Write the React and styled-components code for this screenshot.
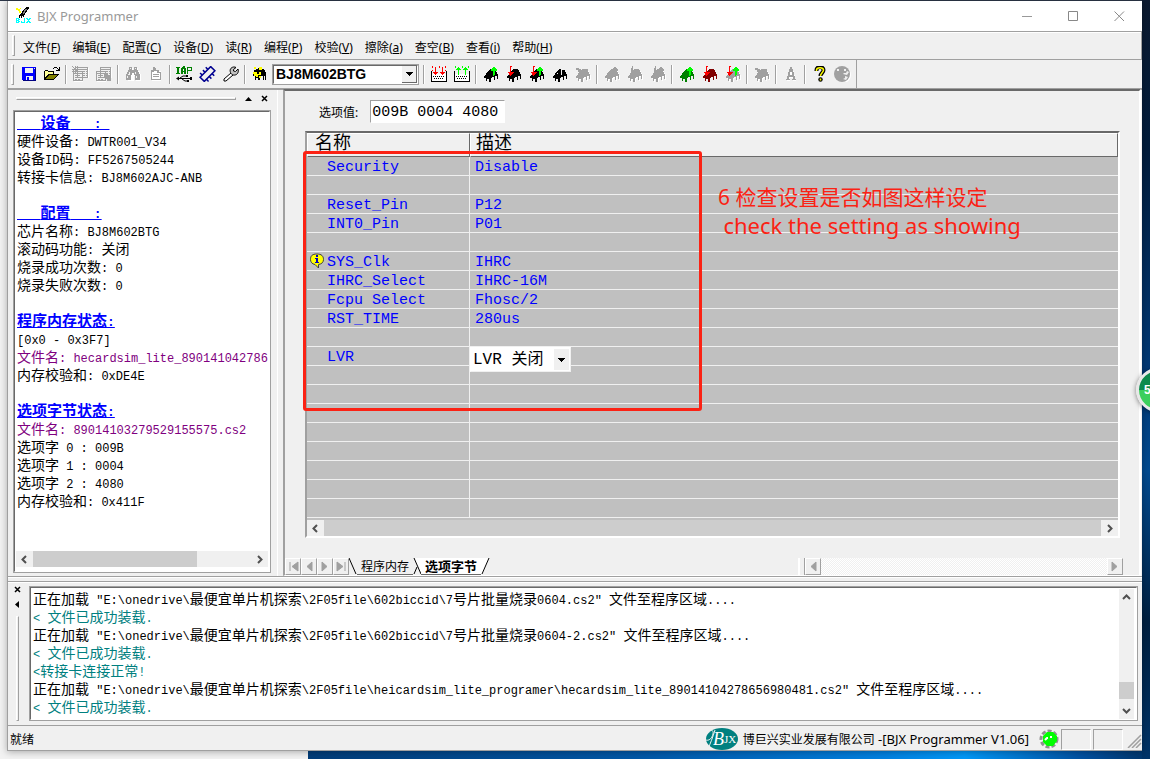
import React, { useState } from "react";
import styled, { createGlobalStyle, css } from "styled-components";

const GlobalStyle = createGlobalStyle`
  * {
    box-sizing: border-box;
  }

  body {
    margin: 0;
    font-family: "Noto Sans", "Noto Sans CJK SC", sans-serif;
    font-size: 12px;
    color: #000;
  }

  button {
    font: inherit;
    color: inherit;
    padding: 0;
    border: 0;
    background: none;
  }
`;

const sunken = css`
  border: 2px solid;
  border-color: #696969 #fff #fff #696969;
  outline: 1px solid #a0a0a0;
  outline-offset: -1px;
`;

const Desktop = styled.div`
  position: relative;
  display: flex;
  min-height: 100vh;
  padding: 1px 8px 8px;
  overflow: hidden;
  background:
    linear-gradient(#0c1a30, #001c3c 20%, #003a78 50%, #004a90 62%, #002040 82%, #003468)
      right / 8px 100% no-repeat,
    linear-gradient(90deg, #003c78, #0058a8 40%, #0080e0 68%, #0098f8 78%, #0050a0 92%, #003468)
      right bottom / calc(100% - 308px) 8px no-repeat,
    linear-gradient(#2c3648, #2c3648) right top / 100% 1px no-repeat,
    #f2f2f2;
`;

const Window = styled.div`
  flex: 1;
  display: flex;
  flex-direction: column;
  min-width: 0;
  background: #f0f0f0;
  border-left: 1px solid #a0a0a0;
  border-bottom: 1px solid #a0a0a0;
  box-shadow: 0 1px 7px rgba(0, 0, 0, 0.3);
  margin-left: -1px;
`;

const TitleBar = styled.header`
  display: flex;
  align-items: center;
  height: 30px;
  padding-left: 8px;
  background: #fff;
`;

const Title = styled.h1`
  flex: 1;
  margin: 0 0 0 4px;
  font-size: 13px;
  font-weight: 400;
  color: #999;
`;

const WindowButton = styled.button`
  display: flex;
  align-items: center;
  justify-content: center;
  width: 46px;
  height: 29px;
`;

const MenuBar = styled.nav`
  display: flex;
  align-items: center;
  height: 29px;
  padding-left: 4px;
  border: solid #a0a0a0;
  border-width: 1px 1px 1px 0;
  box-shadow: inset 0 1px #fff;
`;

const Gripper = styled.span`
  width: 3px;
  height: 21px;
  margin-right: 2px;
  border: 1px solid;
  border-color: #fff #a0a0a0 #a0a0a0 #fff;
`;

const MenuItem = styled.button`
  padding: 2px 6px 0;
  height: 22px;
  white-space: nowrap;
`;

const ToolRow = styled.div`
  display: flex;
  border-bottom: 2px solid #a0a0a0;
`;

const ToolBar = styled.div`
  display: flex;
  align-items: center;
  height: 28px;
  padding: 0 2px 0 3px;
  border-right: 1px solid #a0a0a0;

  ${Gripper} {
    margin-right: 3px;
  }
`;

const ToolButton = styled.button`
  display: flex;
  align-items: center;
  justify-content: center;
  width: 23px;
  height: 22px;
`;

const Separator = styled.span`
  width: 2px;
  height: 19px;
  margin: 0 2px;
  background: #a0a0a0;
  border-right: 1px solid #fff;
`;

const ChipCombo = styled.div`
  position: relative;
  width: 147px;
  margin: 0 2px 0 1px;

  select {
    appearance: none;
    width: 100%;
    height: 21px;
    padding: 0 0 0 2px;
    background: #fff;
    border-radius: 0;
    color: #000;
    font: bold 14px "Liberation Sans", sans-serif;
    ${sunken}
  }
`;

const Arrow = styled.span`
  position: absolute;
  display: flex;
  align-items: center;
  justify-content: center;
  top: 2px;
  right: 2px;
  width: 15px;
  bottom: 2px;
  background: #f0f0f0;
  border: solid #696969;
  border-width: ${({ $flat }) => ($flat ? "0" : "0 1px 1px 0")};
  pointer-events: none;
`;

const Work = styled.div`
  flex: 1;
  display: flex;
  min-height: 0;
`;

const SidePane = styled.aside`
  display: flex;
  flex-direction: column;
  width: 270px;
  padding: 0 6px 3px 5px;
  border-right: 1px solid #fff;
`;

const PaneGrip = styled.div`
  display: flex;
  align-items: center;
  gap: 9px;
  height: 20px;
  padding: 0 3px 3px;

  i {
    flex: 1;
    height: 3px;
    border: 1px solid;
    border-color: #fff #a0a0a0 #a0a0a0 #fff;
  }
`;

const InfoBox = styled.div`
  flex: 1;
  display: flex;
  flex-direction: column;
  min-height: 0;
  padding: 1px 1px 4px;
  background: #fff;
  overflow: hidden;
  ${sunken}
`;

const InfoList = styled.div`
  flex: 1;
  padding-top: 3px;
  overflow: hidden;
`;

const Line = styled.p`
  margin: 0;
  height: 18px;
  line-height: 18px;
  padding-left: 1px;
  white-space: pre;
  font-family: "Liberation Mono", "Noto Sans CJK SC", monospace;
  font-size: 12px;
  color: ${({ $color }) => $color || "#000"};
`;

const Heading = styled.h2`
  margin: 0;
  height: 18px;
  line-height: 18px;
  padding-left: 1px;
  white-space: pre;
  font-family: "Liberation Mono", "Noto Sans CJK SC", monospace;
  font-size: 13px;
  font-weight: 700;
  color: #0000ff;
  text-decoration: underline;
`;

const Han = styled.span`
  font-family: "Noto Sans CJK SC", sans-serif;
  font-size: ${({ $size }) => $size}px;
  line-height: 0;
`;

const ScrollBar = styled.div`
  display: flex;
  flex-direction: ${({ $vertical }) => ($vertical ? "column" : "row")};
  flex: none;
  ${({ $vertical }) => ($vertical ? "width: 15px;" : "height: 16px;")}
  background: #f0f0f0;

  button {
    display: flex;
    align-items: center;
    justify-content: center;
    width: ${({ $vertical }) => ($vertical ? 15 : 17)}px;
    height: ${({ $vertical }) => ($vertical ? 17 : 16)}px;
  }
`;

const Track = styled.div`
  flex: 1;
  display: flex;
  flex-direction: inherit;
`;

const Thumb = styled.div`
  flex: 0 0 ${({ $size }) => $size};
  margin-top: ${({ $offset }) => $offset || "0"};
  background: #cdcdcd;
`;

const MainView = styled.main`
  flex: 1;
  display: flex;
  flex-direction: column;
  min-width: 0;
  margin: -1px 1px 0 5px;
  border: solid;
  border-width: 2px 2px 1px;
  border-color: #696969 #fff #fff #a0a0a0;
`;

const OptionRow = styled.div`
  display: flex;
  align-items: center;
  gap: 12px;
  padding: 9px 0 8px 34px;

  input {
    width: 135px;
    height: 23px;
    padding: 1px 0 0 1px;
    border: 1px solid;
    border-color: #a0a0a0 #fff #fff #a0a0a0;
    background: #fff;
    font: 15px "Liberation Mono", monospace;
    color: #000;
  }
`;

const GridBox = styled.div`
  position: relative;
  margin: 0 19px 0 20px;
  ${sunken}
  border-color: #696969 #fff #fff #a0a0a0;
  outline: 0;
  background: #c0c0c0;
`;

const Grid = styled.table`
  width: 100%;
  margin-bottom: 2px;
  border-collapse: separate;
  border-spacing: 0;
  table-layout: fixed;
  font: 15px "Liberation Mono", "Noto Sans CJK SC", monospace;

  col:first-child {
    width: 163px;
  }

  th {
    height: 24px;
    padding: 2px 6px 0 7px;
    background: #f0f0f0;
    border: 1px solid;
    border-color: #fff #696969 #696969 #fff;
    text-align: left;
    font-weight: 400;
    line-height: 18px;
  }

  th + th {
    padding-left: 5px;
  }

  td {
    position: relative;
    height: 19px;
    padding: 3px 0 0 5px;
    border-bottom: 1px solid #f0f0f0;
    color: #0000ff;
    line-height: 15px;
    white-space: pre;
  }

  td:first-child {
    padding-left: 20px;
    border-right: 1px solid #f0f0f0;
  }
`;

const Hint = styled.span`
  position: absolute;
  left: 2px;
  top: 1px;
  line-height: 0;
`;

const CellCombo = styled.span`
  position: absolute;
  z-index: 1;
  top: 0;
  left: 0;
  width: 101px;

  select {
    appearance: none;
    display: block;
    width: 100%;
    height: 25px;
    padding: 0 0 0 2px;
    border: 1px solid #fff;
    border-color: #fff #f0f0f0 #f0f0f0 #fff;
    border-radius: 0;
    background: #fff;
    color: #000;
    font: 16px "Liberation Mono", "Noto Sans CJK SC", monospace;
  }
`;

const Marker = styled.div`
  position: absolute;
  z-index: 2;
  top: 18px;
  left: -4px;
  width: 399px;
  height: 260px;
  border: 3px solid #fb2214;
  border-radius: 3px;
  pointer-events: none;
`;

const Note = styled.p`
  position: absolute;
  top: 50px;
  left: 411px;
  margin: 0;
  font-family: "Noto Sans", "Noto Sans CJK SC", sans-serif;
  font-size: 21px;
  line-height: 28px;
  color: #fb2214;
  white-space: pre;

  span {
    font-size: 22px;
  }
`;

const SheetBar = styled.div`
  display: flex;
  align-items: stretch;
  height: 17px;
  margin-top: auto;
  padding-right: 16px;
`;

const SheetNav = styled.button`
  display: flex;
  align-items: center;
  justify-content: center;
  width: 16px;
  border: 1px solid;
  border-color: #fff #a0a0a0 #a0a0a0 #fff;
`;

const Sheet = styled.button`
  padding: 0 4px;
  line-height: 15px;
  background: ${({ $active }) => ($active ? "#fff" : "transparent")};
  border-bottom: 1px solid #696969;
  font-size: ${({ $active }) => ($active ? 13 : 12)}px;
  font-weight: ${({ $active }) => ($active ? 700 : 400)};
`;

const SheetScroll = styled.div`
  display: flex;
  width: 325px;
  margin-left: auto;
  border-left: 2px solid #fff;

  &::before {
    content: "";
    width: 4px;
    border-right: 1px solid #a0a0a0;
  }
`;

const DottedTrack = styled.div`
  flex: 1;
  background: repeating-conic-gradient(#fff 0 25%, #f0f0f0 0 50%) 0 0 / 2px 2px;
`;

const OutputPane = styled.section`
  display: flex;
  height: 149px;
  padding: 9px 4px 4px 3px;
  border-top: 1px solid #a0a0a0;
  box-shadow: inset 0 1px #fff, inset 0 4px #f0f0f0, inset 0 5px #a0a0a0, inset 0 6px #fff;
`;

const OutputGrip = styled.div`
  display: flex;
  flex-direction: column;
  align-items: center;
  gap: 8px;
  width: 12px;
  margin-right: 6px;

  i {
    flex: 1;
    width: 3px;
    border: 1px solid;
    border-color: #fff #a0a0a0 #a0a0a0 #fff;
  }
`;

const OutputBox = styled.div`
  flex: 1;
  display: flex;
  min-width: 0;
  padding: 1px 2px 0 0;
  background: #fff;
  ${sunken}

  > div:first-child {
    flex: 1;
    min-width: 0;
    padding: 3px 0 0 1px;
    overflow: hidden;
  }
`;

const StatusBar = styled.footer`
  display: flex;
  align-items: center;
  height: 25px;
  padding: 2px 0 0 2px;
  border-top: 1px solid #a0a0a0;
`;

const Ready = styled.span`
  margin-right: auto;
`;

const Company = styled.span`
  margin: 0 10px 0 4px;
  font-size: 13px;
`;

const StatusCell = styled.span`
  width: 30px;
  height: 21px;
  margin-left: 2px;
  border: 1px solid;
  border-color: #a0a0a0 #fff #fff #a0a0a0;
`;

const Ball = styled.div`
  position: absolute;
  top: 367px;
  right: -36px;
  width: 50px;
  height: 46px;
  padding: 13px 0 0 5px;
  border: 3px solid #e8e8e8;
  border-radius: 50%;
  background: linear-gradient(#0d8a4c 50%, #3ccf5c 50%);
  box-shadow: 0 1px 5px rgba(0, 0, 0, 0.5);
  color: #fff;
  font: bold 12px "Liberation Sans", sans-serif;
`;

// Chinese runs are set larger than the fixed-width Latin ones beside them
const Mixed = ({ text, size = 14 }) =>
  text
    .split(/([\u4e00-\u9fff]+)/)
    .map((part, i) =>
      i % 2 ? (
        <Han key={i} $size={size}>
          {part}
        </Han>
      ) : (
        part
      )
    );

const Svg = ({ w = 16, h = 16, children, ...rest }) => (
  <svg width={w} height={h} viewBox={`0 0 ${w} ${h}`} aria-hidden="true" {...rest}>
    {children}
  </svg>
);

const Chevron = ({ dir }) => {
  const turn = { left: 0, up: 90, right: 180, down: 270 }[dir];
  return (
    <Svg w={9} h={9}>
      <path
        d="M6 1L2.500 4.500L6 8"
        fill="none"
        stroke="#505050"
        strokeWidth="2"
        transform={`rotate(${turn} 4.500 4.500)`}
      />
    </Svg>
  );
};

const DownArrow = () => (
  <Svg w={7} h={4} shapeRendering="crispEdges">
    <path d="M0 0H7L3.500 4Z" />
  </Svg>
);

const ChipBody = ({ color }) => (
  <path
    fill={color}
    d="M1 12V10H2V9H3V7H4V6H5V5H6V4H7V3H12V4H13V6H14V8H15V13H14V10H12V14H11V11H9V12H8V16H6V13H4V15H3V12Z"
  />
);

const UpArrow = ({ color }) => (
  <path fill={color} d="M8 5V3H9V2H10V1H12V2H13V3H14V5H12V9H11V10H10V5Z" />
);

const RedArrow = () => (
  <path fill="#ff0000" d="M4 0H6V1H5V6H8V7H7V8H6V9H5V10H4V9H3V7H2V6H4Z" />
);

const Chip = ({ color = "#000", up, down, cross, slit }) => (
  <Svg shapeRendering="crispEdges">
    {color === "#a0a0a0" && (
      <g transform="translate(1 1)">
        <ChipBody color="#fff" />
      </g>
    )}
    <ChipBody color={color} />
    {up && <UpArrow color={up === true ? "#00ff00" : up} />}
    {down && (down === "gray" ? <path fill="#a0a0a0" d="M5 0H6V6H4V2H5Z" /> : <RedArrow />)}
    {slit && <path fill="#f0f0f0" d="M9 3H10V9H9ZM10 3H12V4H10ZM5 7H6V8H5Z" />}
    {cross && <path fill="#a0a0a0" d="M1 2H4V3H6V4H9V3H13V5H9V7H5V6H3V4H1Z" />}
  </Svg>
);

const SaveIcon = () => (
  <Svg shapeRendering="crispEdges">
    <path fill="#0000ff" d="M1 1H15V15H2L1 14Z" />
    <path fill="#000080" d="M14 2H15V15H2V14H14Z" />
    <path fill="#f0f0f0" d="M4 2H12V7H4ZM5 10H12V14H5Z" />
    <path fill="#0000ff" d="M4 8H12V9H4ZM6 11H8V14H6Z" />
    <path fill="#f0f0f0" d="M13 2H14V3H13Z" />
  </Svg>
);

const OpenIcon = () => (
  <Svg shapeRendering="crispEdges">
    <path d="M0 5H1V4H4V5H10V8H15V9H14V10H13V11H12V12H11V13H10V14H0Z" />
    <path fill="#ffff99" d="M1 5H4V6H9V8H4V9H3V10H2V11H1Z" />
    <path fill="#808000" d="M5 9H13L9 13H1Z" />
    <path d="M9 2H10V1H13V2H14V3H15V1H16V5H12V4H14V3H13V2H10V3H9Z" />
  </Svg>
);

const SheetsIcon = ({ flip }) => (
  <Svg w={17} shapeRendering="crispEdges">
    <g fill="none" stroke="#a0a0a0">
      <path d="M5.500 1.500H15.500V11.500H5.500ZM5.500 3.500H15.500" strokeWidth="1" />
      <path d="M1.500 5.500H10.500V14.500H1.500ZM1.500 7.500H10.500" />
      <path d="M3 9.500H9M3 11.500H9M3 13.500H9M11 5.500H15M11 7.500H15M11 9.500H15" strokeDasharray="2 1" />
    </g>
    {flip ? (
      <path fill="#a0a0a0" d="M9 8H13V9H14V10H15V11H16V15H12V13H10V11H9Z" />
    ) : (
      <path stroke="#a0a0a0" strokeWidth="1" d="M0 0L6 6M6 0L0 6M3 0V7M0 3H7" />
    )}
    <path fill="#fff" d="M2 15H11V16H2ZM16 2H17V12H16Z" />
  </Svg>
);

const FindIcon = () => (
  <Svg shapeRendering="crispEdges">
    <path fill="#fff" d="M5 2H8V5H10V2H13V5H15V8H16V15H11V10H9V15H3V8H5Z" />
    <path fill="#a0a0a0" d="M4 1H7V4H9V1H12V4H13V6H14V8H15V14H10V9H9V7H7V9H6V14H1V8H2V6H3V4H4Z" />
    <path fill="#f0f0f0" d="M5 2H6V3H5ZM10 2H11V3H10ZM4 6H5V9H3V8H4ZM10 6H11V8H10ZM2 10H3V12H2ZM11 10H12V12H11Z" />
  </Svg>
);

const PasteIcon = () => (
  <Svg shapeRendering="crispEdges">
    <path fill="#fff" d="M4 5H13V15H4Z" />
    <path fill="#a0a0a0" d="M5 1H7V2H8V4H11V6H13V14H3V4H5ZM4 6V13H12V7H9V5H6V6ZM5 8H11V9H5ZM5 10H11V11H5Z" fillRule="evenodd" />
  </Svg>
);

const IapIcon = () => (
  <Svg w={17}>
    <path
      d="M0 1.500H4M2 1V7M0 7.500H4M6 7.500V3L8 1L9 3V7.500M6 5.500H9M11.500 8V1.500H15.500V4.500H12"
      fill="none"
      stroke="#008000"
      strokeWidth="1.500"
      shapeRendering="crispEdges"
    />
    <path d="M1 12.500H15M4 12L7 10H10M6 13L9 15H12" fill="none" stroke="#000" />
    <path d="M0 12.500L3 10.500V14.500ZM14 11H16V14H14ZM10 9H12V11H10ZM11 14H13V16H11Z" />
  </Svg>
);

const CutChipIcon = () => (
  <Svg w={17}>
    <g fill="none" stroke="#000090" transform="rotate(-45 8.500 8)">
      <rect x="1" y="5" width="15" height="6" strokeWidth="1.500" />
      <path d="M4 2V5M8 2V5M12 2V5M4 11V14M8 11V14M12 11V14" strokeWidth="1.500" />
    </g>
  </Svg>
);

const WrenchIcon = () => (
  <Svg>
    <path d="M8 7L1 13V15H3L10 9" fill="#fff" stroke="#000" />
    <path
      d="M10.500 1C7.500 1.500 6.500 4 7.500 6.500C8.500 9.500 12.500 10 14.500 7.500C15.500 6 15.500 4.500 15 3L12.500 5.500L10.500 5L10.500 3.500L13 1.500C12.500 1 11.500 1 10.500 1Z"
      fill="#c0c0c0"
      stroke="#000"
    />
  </Svg>
);

const AutoIcon = () => (
  <Svg shapeRendering="crispEdges">
    <path d="M1 9V6H2V4H4V3H6V2H10V3H12V4H13V6H14V14H13V10H12V14H11V10H9V12H8V14H6V12H4V14H3V10H1Z" />
    <path fill="#ffff00" d="M2 1H4V3H2ZM7 1H10V4H7ZM1 6H5V8H7V6H9V9H6V11H4V10H2V8H1ZM7 10H9V12H7Z" />
  </Svg>
);

const BufferIcon = ({ up }) => (
  <Svg shapeRendering="crispEdges">
    <path fill="#fff" d="M1 8H15V15H1Z" />
    <path d="M0 5H1V15H15V5H16V16H0Z" />
    <path d="M2 10.500H14M3 12.500H13" stroke="#000" strokeDasharray="1 1" />
    {up ? (
      <path fill="#00ff00" d="M4 1H5V2H6V3H7V4H5V9H4V4H2V3H3V2H4ZM11 1H12V2H13V3H14V4H12V9H11V4H9V3H10V2H11ZM1 0H2V2H1ZM8 0H9V2H8ZM14 0H15V2H14Z" />
    ) : (
      <path fill="#ff0000" d="M4 1H5V6H7V7H6V8H5V9H4V8H3V7H2V6H4ZM11 1H12V6H14V7H13V8H12V9H11V8H10V7H9V6H11ZM1 0H2V2H1ZM8 0H9V2H8ZM14 0H15V2H14ZM1 4H2V5H1ZM14 4H15V5H14Z" />
    )}
  </Svg>
);

const LetterIcon = () => (
  <Svg shapeRendering="crispEdges">
    <path fill="#fff" d="M8 3H10L13 15H10V12H7V15H4Z" />
    <path fill="#a0a0a0" d="M7 1H9V3H10V6H11V10H12V13H13V14H9V13H10V11H6V13H7V14H3V13H4V10H5V6H6V3H7ZM7 6V9H9V6Z" fillRule="evenodd" />
  </Svg>
);

const HelpIcon = () => (
  <Svg>
    <path
      d="M4.500 5V4C4.500 0 11.500 0 11.500 4C11.500 7 8.500 7 8.500 10"
      fill="none"
      stroke="#000"
      strokeWidth="4"
    />
    <circle cx="8.500" cy="13.500" r="2.200" />
    <path d="M4.500 5V4C4.500 1 11.500 1 11.500 4C11.500 6.500 8.500 7 8.500 10M8.500 12.500V14.500" fill="none" stroke="#ffff00" strokeWidth="1.500" />
  </Svg>
);

const GlobeIcon = () => (
  <Svg w={17}>
    <circle cx="9" cy="9" r="8" fill="#fff" />
    <circle cx="8" cy="8" r="8" fill="#a0a0a0" />
    <path fill="#f0f0f0" d="M3 3H5V5H3ZM10 3H12V5H10ZM13 5L15 6L13 9L9 8L10 7H12ZM11 10L14 11L12 14L9 13L11 12Z" />
  </Svg>
);

const AppIcon = () => (
  <Svg w={17} h={18} shapeRendering="crispEdges">
    <path fill="#ffff00" d="M0 1H2V2H4V4H5V6H3V4H2V3H0ZM4 1H5V2H4Z" />
    <path d="M10 0H13V2H12V3H11V5H10V6H9V8H8V10H7V9H6V11H5V9H4V11H3V8H4V7H5V6H6V4H7V3H8V2H9V1H10Z" />
    <path fill="#808080" d="M9 2H11V3H10V4H9V6H8V7H7V5H8V3H9Z" />
    <path fill="#00ffff" d="M0 11H3V12H4V13H3V14H4V15H3V16H0ZM1 12V13H2V12ZM1 14V15H2V14ZM8 11H9V16H5V14H6V15H8ZM10 11H12V12H13V11H15V12H14V13H13V14H14V15H15V16H13V15H12V16H10V15H11V14H12V13H11V12H10Z" fillRule="evenodd" />
  </Svg>
);

const HintIcon = () => (
  <Svg w={17} h={17}>
    <path d="M8 1C3 1 1.500 3 1.500 6.500C1.500 9 3 11 6 11.500L9.500 15V11.500C13 11 14.500 9 14.500 6.500C14.500 3 12.500 1 8 1Z" fill="#ffff00" stroke="#404040" />
    <path fill="#0000c0" d="M7 2H9V4H7ZM6 5H9V9H10V10H6V9H7V6H6Z" />
  </Svg>
);

const Logo = () => (
  <Svg w={34} h={24}>
    <ellipse cx="17" cy="12" rx="16" ry="11" fill="#008080" />
    <path d="M1 5C5 1 9 3 8 7C7 12 3 14 1 13M10 3C8 10 5 17 3 22" fill="none" stroke="#f0f0f0" />
    <text x="8" y="18" fill="#fff" fontFamily="Liberation Serif, serif" fontStyle="italic" fontSize="18">
      B
    </text>
    <text x="19" y="16" fill="#fff" fontFamily="Liberation Serif, serif" fontSize="11">
      JX
    </text>
  </Svg>
);

const GearIcon = () => (
  <Svg w={20} h={20}>
    <circle cx="10" cy="10" r="8" fill="none" stroke="#909090" strokeWidth="3" strokeDasharray="4 2" />
    <path fill="#00ff00" d="M8 3H14L18 7V12L14 17H8L4 13V7Z" />
    <path d="M6 11L8 9H9M11 8H13" fill="none" stroke="#fff" strokeWidth="2" />
  </Svg>
);

const GRAY = "#a0a0a0";

const tools = [
  [["保存", <SaveIcon />], ["打开", <OpenIcon />]],
  [["复制缓冲区", <SheetsIcon />], ["填充缓冲区", <SheetsIcon flip />]],
  [["查找", <FindIcon />], ["粘贴", <PasteIcon />]],
  [["IAP", <IapIcon />], ["芯片", <CutChipIcon />], ["设置", <WrenchIcon />]],
];

const chipTools = [
  [["下载", <BufferIcon />], ["上传", <BufferIcon up />]],
  [
    ["读芯片", <Chip up />],
    ["写芯片", <Chip down />],
    ["校验芯片", <Chip up down />],
    ["查空芯片", <Chip slit />],
    ["擦除芯片", <Chip color={GRAY} cross />],
  ],
  [
    ["读内存", <Chip color={GRAY} up={GRAY} />],
    ["写内存", <Chip color={GRAY} down="gray" />],
    ["校验内存", <Chip color={GRAY} up={GRAY} down="gray" />],
  ],
  [
    ["读选项", <Chip color="#008000" up />],
    ["写选项", <Chip color="#800000" down />],
    ["校验选项", <Chip color={GRAY} up down />],
  ],
  [["擦除选项", <Chip color={GRAY} cross />]],
  [["字体", <LetterIcon />]],
  [["帮助", <HelpIcon />], ["网站", <GlobeIcon />]],
];

const menus = [
  ["文件", "F"],
  ["编辑", "E"],
  ["配置", "C"],
  ["设备", "D"],
  ["读", "R"],
  ["编程", "P"],
  ["校验", "V"],
  ["擦除", "a"],
  ["查空", "B"],
  ["查看", "i"],
  ["帮助", "H"],
];

const info = [
  { heading: "   设备   : " },
  { text: "硬件设备: DWTR001_V34" },
  { text: "设备ID码: FF5267505244" },
  { text: "转接卡信息: BJ8M602AJC-ANB" },
  { text: "" },
  { heading: "   配置   :" },
  { text: "芯片名称: BJ8M602BTG" },
  { text: "滚动码功能: 关闭" },
  { text: "烧录成功次数: 0" },
  { text: "烧录失败次数: 0" },
  { text: "" },
  { heading: "程序内存状态:" },
  { text: "[0x0 - 0x3F7]" },
  { text: "文件名: hecardsim_lite_89014104278656980481.cs2", color: "#800080" },
  { text: "内存校验和: 0xDE4E" },
  { text: "" },
  { heading: "选项字节状态:" },
  { text: "文件名: 89014103279529155575.cs2", color: "#800080" },
  { text: "选项字 0 : 009B" },
  { text: "选项字 1 : 0004" },
  { text: "选项字 2 : 4080" },
  { text: "内存校验和: 0x411F" },
];

const options = [
  ["Security", "Disable"],
  [],
  ["Reset_Pin", "P12"],
  ["INT0_Pin", "P01"],
  [],
  ["SYS_Clk", "IHRC"],
  ["IHRC_Select", "IHRC-16M"],
  ["Fcpu Select", "Fhosc/2"],
  ["RST_TIME", "280us"],
  [],
  ["LVR", null],
  [],
  [],
  [],
  [],
  [],
  [],
  [],
  [],
];

const TEAL = "#008080";

const log = [
  ['正在加载 "E:\\onedrive\\最便宜单片机探索\\2F05file\\602biccid\\7号片批量烧录0604.cs2" 文件至程序区域....'],
  ["< 文件已成功装载.", TEAL],
  ['正在加载 "E:\\onedrive\\最便宜单片机探索\\2F05file\\602biccid\\7号片批量烧录0604-2.cs2" 文件至程序区域....'],
  ["< 文件已成功装载.", TEAL],
  ["<转接卡连接正常!", TEAL],
  ['正在加载 "E:\\onedrive\\最便宜单片机探索\\2F05file\\heicardsim_lite_programer\\hecardsim_lite_89014104278656980481.cs2" 文件至程序区域....'],
  ["< 文件已成功装载.", TEAL],
];

const ToolGroups = ({ groups }) =>
  groups.map((group, i) => (
    <React.Fragment key={i}>
      {i > 0 && <Separator />}
      {group.map(([label, icon]) => (
        <ToolButton key={label} aria-label={label}>
          {icon}
        </ToolButton>
      ))}
    </React.Fragment>
  ));

const Scroller = ({ vertical, size, offset }) => (
  <ScrollBar $vertical={vertical}>
    <button aria-label={vertical ? "向上" : "向左"}>
      <Chevron dir={vertical ? "up" : "left"} />
    </button>
    <Track>
      <Thumb $size={size} $offset={offset} />
    </Track>
    <button aria-label={vertical ? "向下" : "向右"}>
      <Chevron dir={vertical ? "down" : "right"} />
    </button>
  </ScrollBar>
);

const navShapes = [
  ["第一页", "M4 1V10M12 1L6 5.500L12 10Z"],
  ["上一页", "M10 1L5 5.500L10 10Z"],
  ["下一页", "M4 1L9 5.500L4 10Z"],
  ["最后一页", "M3 1L9 5.500L3 10ZM11 1V10"],
];

const NavGlyph = ({ d }) => (
  <Svg w={14} h={11}>
    <path d={d} fill="#a0a0a0" stroke="#a0a0a0" />
  </Svg>
);

const SidePanel = () => (
  <SidePane>
    <PaneGrip>
      <i />
      <Svg w={7} h={4}>
        <path d="M0 4L3.500 0L7 4Z" />
      </Svg>
      <Svg w={7} h={7}>
        <path d="M1 1L6 6M6 1L1 6" stroke="#000" strokeWidth="1.500" />
      </Svg>
    </PaneGrip>
    <InfoBox>
      <InfoList>
        {info.map(({ heading, text, color }, i) =>
          heading ? (
            <Heading key={i}>
              <Mixed text={heading} size={15} />
            </Heading>
          ) : (
            <Line key={i} $color={color}>
              <Mixed text={text} />
            </Line>
          )
        )}
      </InfoList>
      <Scroller size="75%" />
    </InfoBox>
  </SidePane>
);

const OptionTable = () => {
  const [lvr, setLvr] = useState("off");

  return (
    <GridBox>
      <Grid>
        <colgroup>
          <col />
          <col />
        </colgroup>
        <thead>
          <tr>
            <th>
              <Mixed text="名称" size={18} />
            </th>
            <th>
              <Mixed text="描述" size={18} />
            </th>
          </tr>
        </thead>
        <tbody>
          {options.map(([name, value], i) => (
            <tr key={i}>
              <td>
                {name === "SYS_Clk" && (
                  <Hint>
                    <HintIcon />
                  </Hint>
                )}
                {name}
              </td>
              <td>
                {value}
                {name === "LVR" && (
                  <CellCombo>
                    <select aria-label="LVR" value={lvr} onChange={(e) => setLvr(e.target.value)}>
                      <option value="off">LVR 关闭</option>
                    </select>
                    <Arrow $flat>
                      <DownArrow />
                    </Arrow>
                  </CellCombo>
                )}
              </td>
            </tr>
          ))}
        </tbody>
      </Grid>
      <Scroller size="100%" />
      <Marker />
      <Note>
        6 检查设置是否如图这样设定{"\n "}
        <span>check the setting as showing</span>
      </Note>
    </GridBox>
  );
};

const SheetTabs = () => (
  <SheetBar>
    {navShapes.map(([label, d]) => (
      <SheetNav key={label} aria-label={label}>
        <NavGlyph d={d} />
      </SheetNav>
    ))}
    <Svg w={8} h={17}>
      <path d="M0 0L7 16" stroke="#000" />
    </Svg>
    <Sheet>程序内存</Sheet>
    <Svg w={8} h={17}>
      <path d="M1 0H8V16Z" fill="#fff" />
      <path d="M1 0L8 16M4 9L1 16" stroke="#000" />
    </Svg>
    <Sheet $active>选项字节</Sheet>
    <Svg w={9} h={17}>
      <path d="M0 0H8L1 16H0Z" fill="#fff" />
      <path d="M8 0L1 16" stroke="#000" />
    </Svg>
    <SheetScroll>
      <SheetNav aria-label="向左滚动">
        <NavGlyph d={navShapes[1][1]} />
      </SheetNav>
      <DottedTrack />
      <SheetNav aria-label="向右滚动">
        <NavGlyph d={navShapes[2][1]} />
      </SheetNav>
    </SheetScroll>
  </SheetBar>
);

const Output = () => (
  <OutputPane>
    <OutputGrip>
      <Svg w={7} h={7}>
        <path d="M1 1L6 6M6 1L1 6" stroke="#000" strokeWidth="1.500" />
      </Svg>
      <Svg w={4} h={7}>
        <path d="M4 0L0 3.500L4 7Z" />
      </Svg>
      <i />
    </OutputGrip>
    <OutputBox>
      <div>
        {log.map(([text, color], i) => (
          <Line key={i} $color={color}>
            <Mixed text={text} />
          </Line>
        ))}
      </div>
      <Scroller vertical size="17px" offset="76px" />
    </OutputBox>
  </OutputPane>
);

export default function App() {
  return (
    <Desktop>
      <GlobalStyle />
      <Window>
        <TitleBar>
          <AppIcon />
          <Title>BJX Programmer</Title>
          <WindowButton aria-label="最小化">
            <Svg w={11} h={11}>
              <path d="M0 5.500H10" stroke="#999" />
            </Svg>
          </WindowButton>
          <WindowButton aria-label="最大化">
            <Svg w={11} h={11}>
              <path d="M0.500 0.500H9.500V9.500H0.500Z" fill="none" stroke="#888" />
            </Svg>
          </WindowButton>
          <WindowButton aria-label="关闭">
            <Svg w={11} h={11}>
              <path d="M0.500 0.500L10 10M10 0.500L0.500 10" stroke="#888" />
            </Svg>
          </WindowButton>
        </TitleBar>
        <MenuBar>
          <Gripper />
          {menus.map(([label, key]) => (
            <MenuItem key={label}>
              {label}(<u>{key}</u>)
            </MenuItem>
          ))}
        </MenuBar>
        <ToolRow>
          <ToolBar>
            <Gripper />
            <ToolGroups groups={tools} />
            <Separator />
            <ToolButton aria-label="自动">
              <AutoIcon />
            </ToolButton>
            <ChipCombo>
              <select aria-label="芯片型号" defaultValue="BJ8M602BTG">
                <option>BJ8M602BTG</option>
              </select>
              <Arrow>
                <DownArrow />
              </Arrow>
            </ChipCombo>
            <Separator />
            <ToolGroups groups={chipTools} />
          </ToolBar>
        </ToolRow>
        <Work>
          <SidePanel />
          <MainView>
            <OptionRow>
              <label htmlFor="option-value">选项值:</label>
              <input id="option-value" defaultValue="009B 0004 4080" />
            </OptionRow>
            <OptionTable />
            <SheetTabs />
          </MainView>
        </Work>
        <Output />
        <StatusBar>
          <Ready>就绪</Ready>
          <Logo />
          <Company>
            <Mixed text="博巨兴实业发展有限公司 -[BJX Programmer V1.06]" size={12} />
          </Company>
          <GearIcon />
          <StatusCell />
          <StatusCell />
          <Svg w={19} h={18}>
            <path d="M5 18L18 5M9 18L18 9M13 18L18 13" stroke="#a0a0a0" strokeWidth="1.500" />
          </Svg>
        </StatusBar>
      </Window>
      <Ball>5</Ball>
    </Desktop>
  );
}
